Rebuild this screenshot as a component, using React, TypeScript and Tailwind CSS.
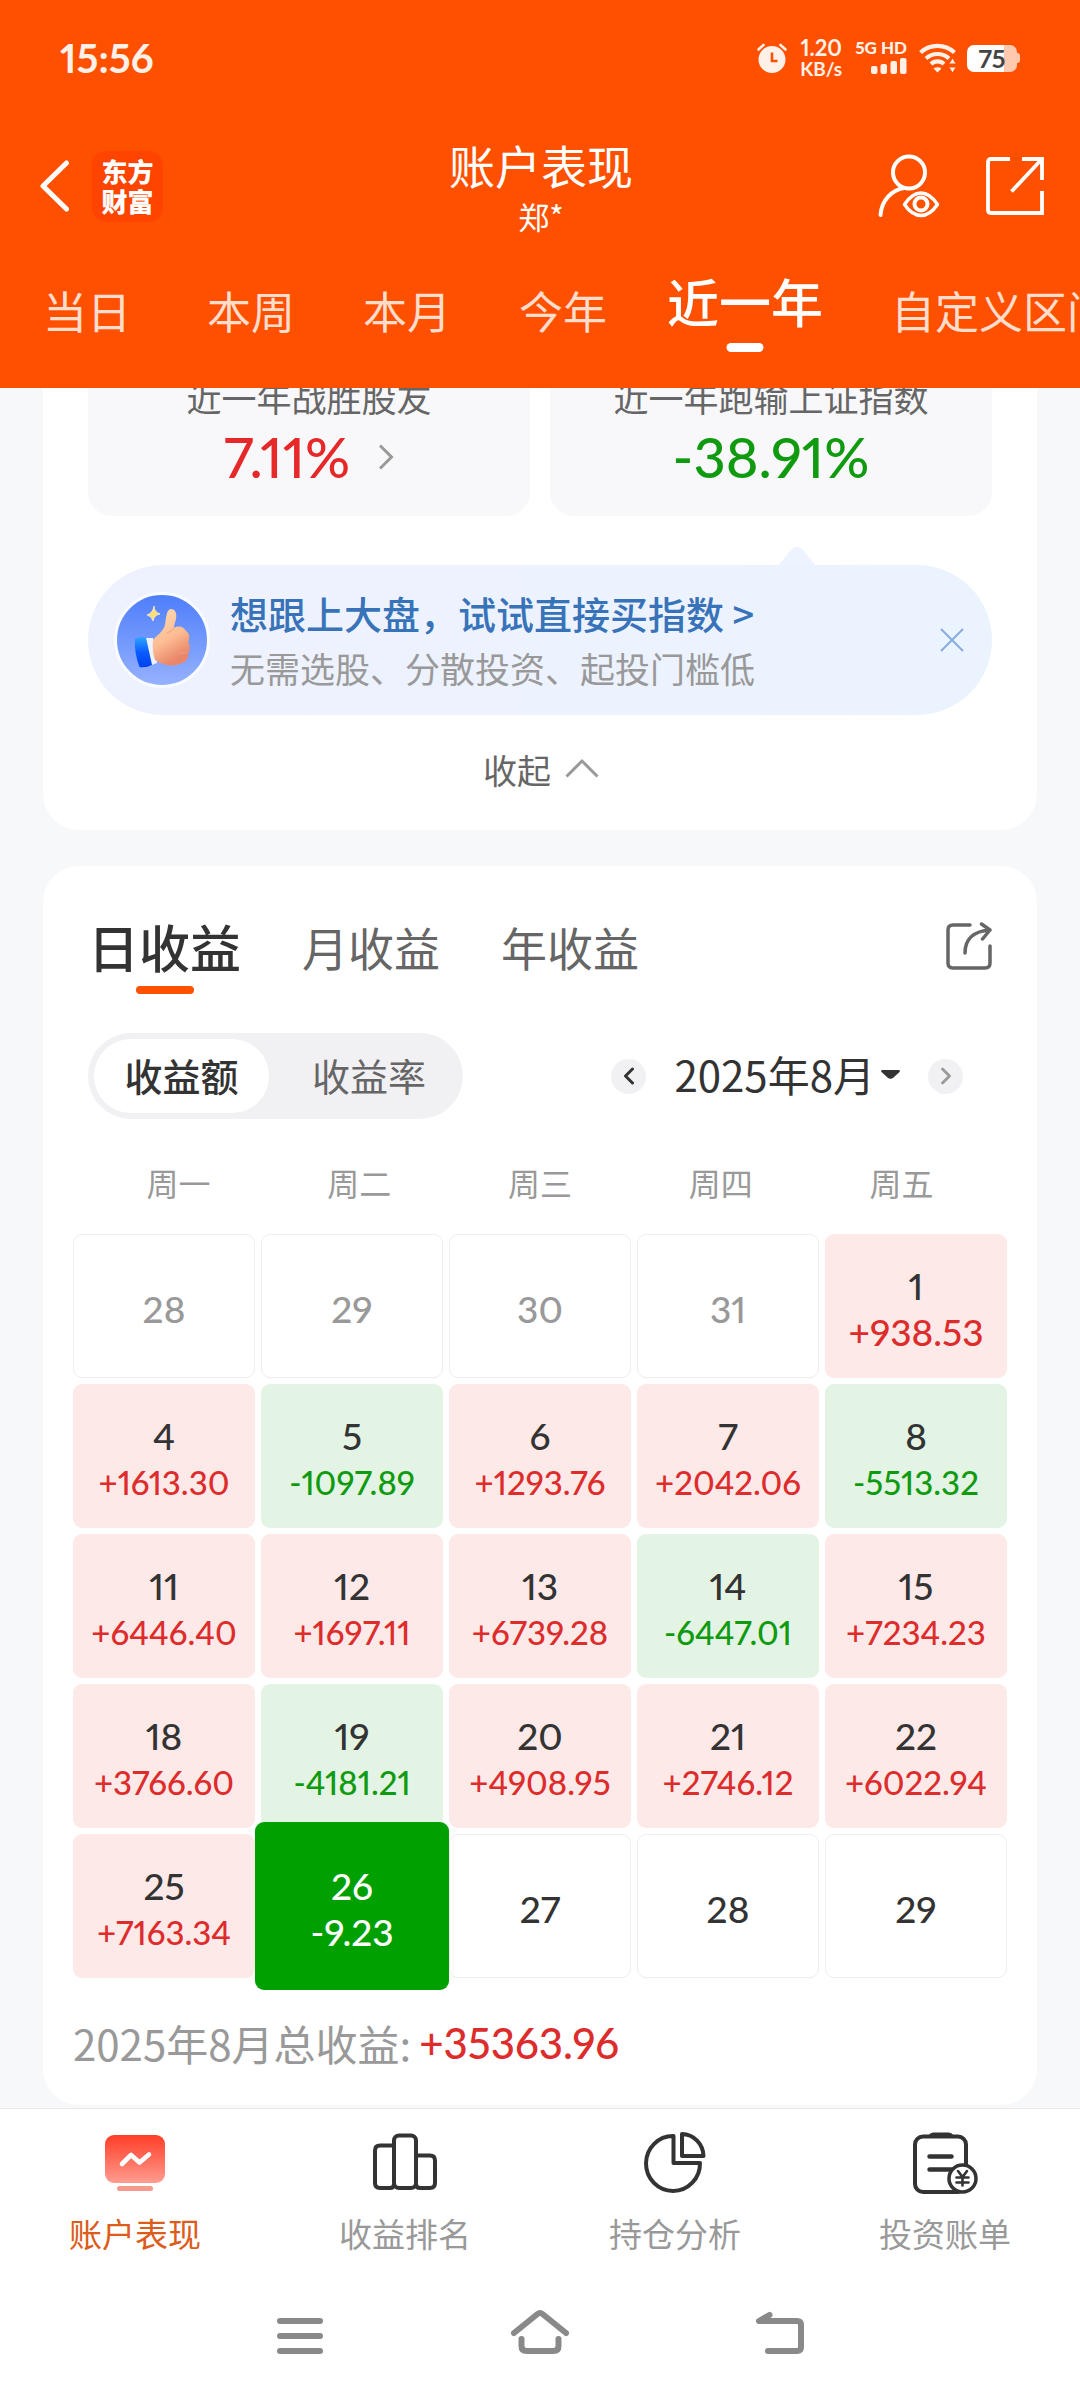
import React, { useState } from "react";

const NUM = "font-['Lato','Noto_Sans_CJK_SC',sans-serif] proportional-nums";

type Tone = "up" | "down" | "none" | "muted" | "selected";
type Day = { day: number; value?: string; tone: Tone };

const days: Day[] = [
  { day: 28, tone: "muted" },
  { day: 29, tone: "muted" },
  { day: 30, tone: "muted" },
  { day: 31, tone: "muted" },
  { day: 1, value: "+938.53", tone: "up" },
  { day: 4, value: "+1613.30", tone: "up" },
  { day: 5, value: "-1097.89", tone: "down" },
  { day: 6, value: "+1293.76", tone: "up" },
  { day: 7, value: "+2042.06", tone: "up" },
  { day: 8, value: "-5513.32", tone: "down" },
  { day: 11, value: "+6446.40", tone: "up" },
  { day: 12, value: "+1697.11", tone: "up" },
  { day: 13, value: "+6739.28", tone: "up" },
  { day: 14, value: "-6447.01", tone: "down" },
  { day: 15, value: "+7234.23", tone: "up" },
  { day: 18, value: "+3766.60", tone: "up" },
  { day: 19, value: "-4181.21", tone: "down" },
  { day: 20, value: "+4908.95", tone: "up" },
  { day: 21, value: "+2746.12", tone: "up" },
  { day: 22, value: "+6022.94", tone: "up" },
  { day: 25, value: "+7163.34", tone: "up" },
  { day: 26, value: "-9.23", tone: "selected" },
  { day: 27, tone: "none" },
  { day: 28, tone: "none" },
  { day: 29, tone: "none" },
];

const cellStyle: Record<Tone, string> = {
  up: "bg-[#fde9e8] text-[#333]",
  down: "bg-[#e3f4e5] text-[#333]",
  none: "border border-[#eee] bg-white text-[#333]",
  muted: "border border-[#eee] bg-white text-[#999]",
  selected: "relative z-10 -mx-1.5 -my-3 bg-[#00a000] text-white",
};

const valueStyle: Record<Tone, string> = {
  up: "text-[#dd2c2c]",
  down: "text-[#109a10]",
  none: "",
  muted: "",
  selected: "text-white",
};

function StatusBar() {
  return (
    <div className="flex h-[116px] items-center justify-between px-[60px] text-[#fff0e8]">
      <time className={`${NUM} text-[40px] leading-[48px] font-bold`}>15:56</time>
      <div className="flex items-center">
        <svg className="h-[30px] w-[30px]" viewBox="0 0 30 30" aria-label="闹钟">
          <circle cx="15" cy="16.500" r="13.500" fill="currentColor" />
          <path d="M1.500 6.500 6.500 2M28.500 6.500 23.500 2" stroke="currentColor" strokeWidth="2.600" strokeLinecap="round" />
          <path d="M15 9.500v8.500h5.500" fill="none" stroke="#ff5000" strokeWidth="2.600" />
        </svg>
        <div className={`${NUM} ml-2.5 flex w-[48px] flex-col items-center font-bold`}>
          <span className="text-[22px] leading-[22px]">1.20</span>
          <span className="text-[19px] leading-[20px]">KB/s</span>
        </div>
        <div className="ml-2.5 flex flex-col items-end gap-1">
          <span className={`${NUM} text-[17px] leading-[12px] font-black whitespace-nowrap`}>5G HD</span>
          <svg className="h-4 w-9" viewBox="0 0 36 16" fill="currentColor" aria-label="信号">
            <rect x="0" y="8" width="6.500" height="8" rx="2" />
            <rect x="9.500" y="6" width="6.500" height="10" rx="2" />
            <rect x="19.500" y="3" width="6.500" height="13" rx="2" />
            <rect x="29" y="0" width="6.500" height="16" rx="2" />
          </svg>
        </div>
        <svg className="ml-3 h-[30px] w-[38px]" viewBox="0 0 38 30" fill="none" stroke="currentColor" strokeWidth="4.200" aria-label="无线网络">
          <path d="M1.500 9.500a25 25 0 0 1 34 0" />
          <path d="M7 15.500a17 17 0 0 1 23 0" />
          <path d="M12 21a9.500 9.500 0 0 1 13 0" />
          <path d="M14.500 25.500q4-2.500 8 0l-4 4z" fill="currentColor" stroke="none" />
          <path d="M33.500 15l3.800 6h-7.600zM33.500 30l3.800-6h-7.600z" fill="currentColor" stroke="#ff5000" strokeWidth="1" />
        </svg>
        <div className="ml-2.5 flex items-center">
          <div className="flex h-[27px] w-[50px] items-center justify-center rounded-[7px] bg-linear-to-r from-white from-75% to-[#ffc9b0] to-75%">
            <span className={`${NUM} text-[25px] leading-[27px] font-bold text-[#444]`}>75</span>
          </div>
          <div className="h-2.5 w-[3px] rounded-r-sm bg-[#ffc9b0]" />
        </div>
      </div>
    </div>
  );
}

const ranges = ["当日", "本周", "本月", "今年", "近一年", "自定义区间"];

function Header() {
  const [active, setActive] = useState("近一年");
  return (
    <header className="relative z-20 overflow-hidden bg-[#ff5000] text-white">
      <StatusBar />
      <div className="grid h-[140px] grid-cols-[1fr_auto_1fr] items-center pr-9 pl-[38px]">
        <div className="flex items-center">
          <button aria-label="返回" className="block">
            <svg className="h-[54px] w-8" viewBox="0 0 32 54" fill="none" stroke="currentColor" strokeWidth="5" strokeLinecap="round" strokeLinejoin="round">
              <path d="M28.500 4 5 27l23.500 23" />
            </svg>
          </button>
          <div className="ml-[22px] flex h-[71px] w-[71px] flex-col items-center justify-center rounded-[14px] bg-[#ff4400] text-[26px] leading-[30px] font-black">
            <span>东方</span>
            <span>财富</span>
          </div>
        </div>
        <div className="flex flex-col items-center pt-1">
          <h1 className="text-[46px] leading-[56px]">账户表现</h1>
          <p className="text-[31px] leading-[48px]">郑*</p>
        </div>
        <div className="flex items-center justify-end gap-[46px]">
          <button aria-label="账户可见">
            <svg className="h-[64px] w-[62px]" viewBox="0 0 62 64" fill="none" stroke="currentColor" strokeWidth="4" strokeLinecap="round">
              <circle cx="31" cy="18.500" r="16" />
              <path d="M2.500 61C3.500 46 14 36 26 34" />
              <path d="M26.500 50.500Q34 39 43 39t16.500 11.500Q52 61.500 43 61.500T26.500 50.500Z" strokeLinejoin="round" strokeWidth="3.500" />
              <circle cx="43" cy="50" r="6.500" />
            </svg>
          </button>
          <button aria-label="分享">
            <svg className="h-[60px] w-[58px]" viewBox="0 0 58 60" fill="none" stroke="currentColor" strokeWidth="3.800">
              <path d="M24 3H5q-3 0-3 3v48q0 3 3 3h51V35" />
              <path d="M36 3h20v21M56 3 25.500 35.500" />
            </svg>
          </button>
        </div>
      </div>
      <nav className="flex h-[132px] pl-[43px] whitespace-nowrap">
        <div className="flex gap-[68px]">
          {ranges.map((r, i) => {
            const on = r === active;
            return (
              <button
                key={r}
                onClick={() => setActive(r)}
                className={`relative flex h-[96px] items-center ${i === 0 ? "mr-2" : ""} ${on ? "-ml-2 pb-1.5 text-[52px] font-medium" : "pt-3 text-[44px] text-[#ffdccb]"}`}
              >
                {r}
                {on && <span className="absolute bottom-0 left-1/2 h-[9px] w-[37px] -translate-x-1/2 rounded-full bg-white" />}
              </button>
            );
          })}
        </div>
      </nav>
    </header>
  );
}

function ThumbBadge() {
  return (
    <svg className="h-24 w-24 shrink-0" viewBox="-3 -3 96 96" aria-hidden="true">
      <defs>
        <linearGradient id="badge" x1="0" y1="0" x2="0" y2="1">
          <stop offset="0" stopColor="#4d7dfa" />
          <stop offset="1" stopColor="#97b3ff" />
        </linearGradient>
        <linearGradient id="skin" x1="0" y1="0" x2="0.4" y2="1">
          <stop offset="0" stopColor="#ffdcb8" />
          <stop offset="0.6" stopColor="#fdbd92" />
          <stop offset="1" stopColor="#e98568" />
        </linearGradient>
        <linearGradient id="cuff" x1="0" y1="0" x2="0" y2="1">
          <stop offset="0" stopColor="#2ea6ff" />
          <stop offset="0.5" stopColor="#0b5cff" />
          <stop offset="1" stopColor="#0040f0" />
        </linearGradient>
      </defs>
      <circle cx="45" cy="45" r="46.500" fill="url(#badge)" stroke="#f8fbff" strokeWidth="3" />
      <path d="M27 43 36 43 40 68 32 71Z" fill="#eef2ff" />
      <path d="M18 44q5-3 11-1.500L35 70q-6 3-12.500 2Q17 57 18 44Z" fill="url(#cuff)" />
      <path
        d="M36 45c4-5 10-8 12-15 1-5 1-16 6-16 5 0 6 6 5 10-1 4-2 6-2 9 5-3 10-1 12 3 4 2 4 8 2 11 3 4 2 9 0 11 1 5-2 9-6 10-7 4-19 3-27-3C36 59 35 52 36 45Z"
        fill="url(#skin)"
      />
      <path d="M57 33c-2 3-5 4-7 5M64 47c3 1 5 0 7-1M63 58c3 1 6 0 8-1" fill="none" stroke="#eda277" strokeWidth="1" strokeLinecap="round" />
      <path d="M37 11q0 6 6 8-6 1-7 7-1-5-6-6 6-2 7-9Z" fill="#ffdf7a" stroke="#fff0c0" strokeWidth="0.8" />
    </svg>
  );
}

function SummaryCard() {
  return (
    <section className="rounded-b-[36px] bg-white px-[45px]">
      <div className="grid grid-cols-2 gap-5">
        <button className="flex flex-col items-center rounded-3xl bg-[#f8f8fa] pt-[30px] pb-[26px]">
          <span className="text-[35px] leading-[54px] text-[#666]">近一年战胜股友</span>
          <span className={`${NUM} flex items-center gap-7 text-[56px] leading-[66px] font-medium text-[#e62828]`}>
            7.11%
            <svg className="h-[26px] w-4" viewBox="0 0 16 26" fill="none" stroke="#999" strokeWidth="3">
              <path d="M2 1.500 13.500 13 2 24.500" />
            </svg>
          </span>
        </button>
        <div className="flex flex-col items-center rounded-3xl bg-[#f8f8fa] pt-[30px] pb-[26px]">
          <span className="text-[35px] leading-[54px] text-[#666]">近一年跑输上证指数</span>
          <span className={`${NUM} text-[56px] leading-[66px] font-medium text-[#109a10]`}>-38.91%</span>
        </div>
      </div>

      <div className="relative mt-[49px] flex h-[150px] items-center rounded-full bg-linear-to-r from-[#eef2fe] to-[#ebf3fe] pr-7 pl-[26px]">
        <svg className="absolute -top-[19px] right-[176px] h-5 w-[38px]" viewBox="0 0 38 20" aria-hidden="true">
          <path d="M0 20 13 4q6-7 12 0l13 16Z" fill="#edf3ff" />
        </svg>
        <ThumbBadge />
        <a href="#index" className="ml-5 block flex-1">
          <span className="block text-[38px] leading-[56px] font-medium text-[#3873b9]">想跟上大盘，试试直接买指数 &gt;</span>
          <span className="block text-[35px] leading-[54px] text-[#999]">无需选股、分散投资、起投门槛低</span>
        </a>
        <button aria-label="关闭">
          <svg className="h-6 w-6" viewBox="0 0 24 24" stroke="#86addb" strokeWidth="2">
            <path d="M1 1 23 23M23 1 1 23" />
          </svg>
        </button>
      </div>

      <button className="flex h-[115px] w-full items-center justify-center gap-3.5 text-[34px] leading-[48px] text-[#666]">
        <span className="pb-1.5 pl-0.5">收起</span>
        <svg className="mb-2.5 h-5 w-[34px]" viewBox="0 0 34 20" fill="none" stroke="#999" strokeWidth="3">
          <path d="M1.500 18.500 17 3l15.500 15.500" />
        </svg>
      </button>
    </section>
  );
}

function EarningsCard() {
  const [tab, setTab] = useState("日收益");
  const [mode, setMode] = useState("收益额");
  return (
    <section className="mt-9 rounded-[36px] bg-white px-[30px] pt-8 pb-[30px]">
      <div className="flex items-center justify-between px-[15px]">
        <div className="flex gap-[61px]">
          {["日收益", "月收益", "年收益"].map((t) => (
            <button
              key={t}
              onClick={() => setTab(t)}
              className={`relative flex h-24 items-center leading-[92px] ${t === tab ? "text-[51px] font-medium text-[#333]" : "text-[46px] text-[#666]"}`}
            >
              {t}
              {t === tab && <span className="absolute bottom-0 left-1/2 h-2 w-[58px] -translate-x-1/2 rounded-full bg-[#ff5000]" />}
            </button>
          ))}
        </div>
        <button aria-label="分享收益">
          <svg className="h-12 w-[46px]" viewBox="0 0 46 48" fill="none" stroke="#666" strokeWidth="3.500" strokeLinecap="round" strokeLinejoin="round">
            <path d="M24 3H7Q2 3 2 8v33q0 5 5 5h32q5 0 5-5V24" />
            <path d="M19 31C19 17 28 9 44 8M35.500 2 44 8l-7.500 9" />
          </svg>
        </button>
      </div>

      <div className="mt-[39px] flex items-center justify-between px-[15px]">
        <div className="flex h-[86px] w-[375px] rounded-full bg-[#f1f1f4] p-1.5">
          {["收益额", "收益率"].map((m) => (
            <button
              key={m}
              onClick={() => setMode(m)}
              className={`rounded-full pb-1 text-[38px] ${m === "收益额" ? "w-[175px]" : "flex-1 pl-3"} ${m === mode ? "bg-white font-medium text-[#333]" : "text-[#666]"}`}
            >
              {m}
            </button>
          ))}
        </div>
        <div className="flex items-center pr-[29px]">
          <button aria-label="上个月" className="flex h-[35px] w-[35px] items-center justify-center rounded-full bg-[#f1f1f4]">
            <svg className="h-[18px] w-3" viewBox="0 0 12 18" fill="none" stroke="#333" strokeWidth="3" strokeLinecap="round" strokeLinejoin="round">
              <path d="M9.500 2 2.500 9l7 7" />
            </svg>
          </button>
          <button className="ml-7 flex items-center gap-1.5 pb-1 text-[42px] leading-[60px] text-[#333]">
            2025年8月
            <svg className="h-[9px] w-[19px]" viewBox="0 0 19 9" fill="#333">
              <path d="M1 0h17q1.500.500.500 2l-6 5.500Q9.500 10 6.500 7.500L.500 2Q-.500.500 1 0Z" />
            </svg>
          </button>
          <button aria-label="下个月" className="ml-7 flex h-[35px] w-[35px] items-center justify-center rounded-full bg-[#f1f1f4]">
            <svg className="h-[18px] w-3" viewBox="0 0 12 18" fill="none" stroke="#999" strokeWidth="2.800" strokeLinecap="round" strokeLinejoin="round">
              <path d="M2.500 2l7 7-7 7" />
            </svg>
          </button>
        </div>
      </div>

      <div className="mt-[39px] grid grid-cols-5 px-[15px] text-center text-[32px] leading-[48px] text-[#999]">
        {["周一", "周二", "周三", "周四", "周五"].map((w) => (
          <span key={w}>{w}</span>
        ))}
      </div>

      <div className="mt-7 grid auto-rows-[144px] grid-cols-5 gap-1.5">
        {days.map((d, i) => {
          const large = d.value !== undefined && d.value.length < 8;
          return (
            <button key={i} className={`${NUM} flex flex-col items-center justify-center rounded-[9px] pt-1.5 font-medium ${cellStyle[d.tone]}`}>
              <span className="text-[37px] leading-[46px]">{d.day}</span>
              {d.value && <span className={`leading-[46px] ${large ? "text-[37px]" : "text-[33px]"} ${valueStyle[d.tone]}`}>{d.value}</span>}
            </button>
          );
        })}
      </div>

      <p className="mt-[33px] flex items-center gap-2 text-[42px] leading-[64px] text-[#999]">
        <span>2025年8月总收益:</span>
        <strong className={`${NUM} font-medium text-[#dd2c2c]`}>+35363.96</strong>
      </p>
    </section>
  );
}

function AccountIcon() {
  return (
    <svg className="h-[64px] w-[66px]" viewBox="0 0 66 64">
      <defs>
        <linearGradient id="screen" x1="0" y1="0" x2="0" y2="1">
          <stop offset="0" stopColor="#ff3d26" />
          <stop offset="1" stopColor="#ff9c90" />
        </linearGradient>
      </defs>
      <rect x="3" y="4" width="60" height="48" rx="9" fill="url(#screen)" />
      <path d="M20 33 29 24l8.500 7.500L47 23.500" fill="none" stroke="#fff" strokeWidth="4.600" strokeLinecap="round" strokeLinejoin="round" />
      <rect x="15" y="55" width="36" height="5" rx="2.500" fill="#f79a8e" />
    </svg>
  );
}

function RankIcon() {
  return (
    <svg className="h-[64px] w-[66px]" viewBox="0 0 66 64" fill="none" stroke="#333" strokeWidth="4">
      <path d="M22 14.500H8q-5 0-5 5V52q0 5 5 5h10q4 0 4-4" />
      <rect x="22" y="4.500" width="22" height="52.500" rx="5" />
      <path d="M44 24.500h14q5 0 5 5V52q0 5-5 5H48q-4 0-4-4" />
    </svg>
  );
}

function PieIcon() {
  return (
    <svg className="h-[64px] w-[66px]" viewBox="0 0 66 64" fill="none" stroke="#333" strokeWidth="4" strokeLinejoin="round">
      <path d="M31.500 5A27 27.500 0 1 0 58 32H31.500Z" />
      <path d="M40 3v22h21.500A22 22.500 0 0 0 40 3Z" />
    </svg>
  );
}

function BillIcon() {
  return (
    <svg className="h-[64px] w-[66px]" viewBox="0 0 66 64" fill="none" stroke="#333" strokeWidth="4" strokeLinecap="round">
      <rect x="3" y="5.500" width="51" height="55.500" rx="8" />
      <path d="M17 5.500Q17.500 2 21 2h16q3.500 0 4 3.500Z" fill="#333" strokeWidth="1" />
      <path d="M17.500 25.500h22M17.500 38.500h22" strokeWidth="4.500" />
      <circle cx="50.500" cy="47.500" r="13.500" fill="#fff" strokeWidth="3.500" />
      <path d="M46 40l4.500 6 4.500-6M50.500 46v8.500M44.500 46.500h12M44.500 51.500h12" strokeWidth="2.600" />
    </svg>
  );
}

const navItems = [
  { label: "账户表现", icon: <AccountIcon />, on: true },
  { label: "收益排名", icon: <RankIcon />, on: false },
  { label: "持仓分析", icon: <PieIcon />, on: false },
  { label: "投资账单", icon: <BillIcon />, on: false },
];

function Footer() {
  return (
    <footer className="border-t border-[#eaeaec] bg-white">
      <nav className="grid grid-cols-4 pt-[22px]">
        {navItems.map((n) => (
          <button key={n.label} className={`flex flex-col items-center gap-3 text-[33px] leading-[52px] ${n.on ? "text-[#dc5c1a]" : "text-[#999]"}`}>
            {n.icon}
            {n.label}
          </button>
        ))}
      </nav>
      <div className="flex justify-center gap-[180px] pt-[49px] pb-[42px]">
        <button aria-label="最近任务">
          <svg className="h-[50px] w-[60px]" viewBox="0 0 60 50" stroke="#898989" strokeWidth="6" strokeLinecap="round">
            <path d="M10 13h40M10 28h40M10 43h40" />
          </svg>
        </button>
        <button aria-label="主屏幕">
          <svg className="h-[50px] w-[60px]" viewBox="0 0 60 50" fill="none" stroke="#898989" strokeWidth="6" strokeLinecap="round" strokeLinejoin="round">
            <path d="M4 25 27.500 6q2.500-2 5 0L56 25M11.500 31v7q0 5 5 5h27q5 0 5-5v-7" />
          </svg>
        </button>
        <button aria-label="返回上一级">
          <svg className="h-[50px] w-[60px]" viewBox="0 0 60 50" fill="none" stroke="#898989" strokeWidth="6" strokeLinecap="round" strokeLinejoin="round">
            <path d="M19.500 7 9 13h38q4 0 4 4v22q0 4-4 4H18" />
          </svg>
        </button>
      </div>
    </footer>
  );
}

export default function App() {
  return (
    <div lang="zh-CN" className="flex min-h-screen flex-col bg-[#f7f8fa] font-['Noto_Sans_CJK_SC',sans-serif]">
      <Header />
      <main className="-mt-12 flex-1 px-[43px] pb-[3px]">
        <SummaryCard />
        <EarningsCard />
      </main>
      <Footer />
    </div>
  );
}
